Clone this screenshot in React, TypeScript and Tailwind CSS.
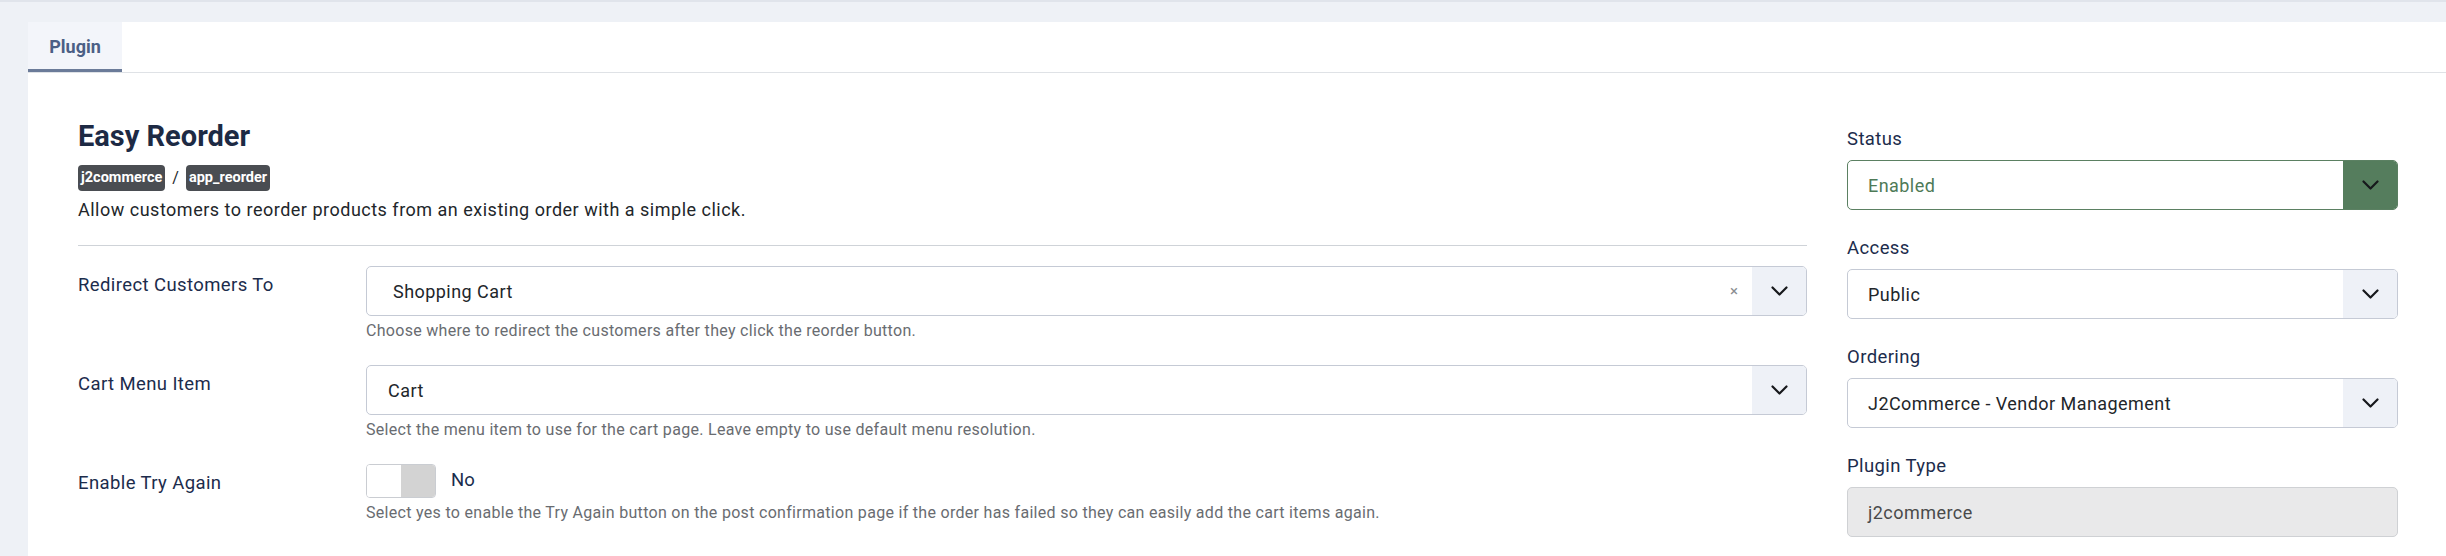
import { ReactNode } from "react";

function Chevron() {
  return (
    <svg width="17" height="10" viewBox="0 0 17 10" fill="none">
      <polyline
        points="1.5,1.5 8.5,8.5 15.5,1.5"
        stroke="#16181b"
        strokeWidth="2.2"
        strokeLinecap="round"
        strokeLinejoin="round"
      />
    </svg>
  );
}

function Select({
  value,
  pad = "pl-[20px]",
  clearable = false,
}: {
  value: string;
  pad?: string;
  clearable?: boolean;
}) {
  return (
    <div className="flex h-[50px] rounded-[5px] border border-[#c5cad5] bg-white overflow-hidden">
      <div className={`flex flex-1 items-center ${pad} text-[18px] tracking-[0.45px] text-[#22262a]`}>
        {value}
      </div>
      {clearable && (
        <div className="flex w-[36px] items-center justify-center text-[15px] text-[#8a8d91]">
          ×
        </div>
      )}
      <div className="flex w-[54px] items-center justify-center bg-[#eef1f7]">
        <Chevron />
      </div>
    </div>
  );
}

function Row({ label, help, children }: { label: string; help: string; children: ReactNode }) {
  return (
    <div className="grid grid-cols-[288px_1fr]">
      <div className="pt-[6px] text-[18.5px] leading-[26px] tracking-[0.4px] text-[#1c2c4c]">{label}</div>
      <div>
        {children}
        <p className="mt-[4px] text-[16px] leading-[22px] tracking-[0.3px] text-[#696c71]">{help}</p>
      </div>
    </div>
  );
}

function Field({ label, children }: { label: string; children: ReactNode }) {
  return (
    <div className="mb-[25px]">
      <div className="mb-[8px] text-[18.5px] leading-[26px] tracking-[0.4px] text-[#1c2c4c]">{label}</div>
      {children}
    </div>
  );
}

export default function App() {
  return (
    <div className="h-[556px] overflow-hidden border-t-2 border-[#e0e4eb] bg-[#eef1f6] pt-[20px] pl-[28px] font-[Roboto,sans-serif]">
      <div className="h-full bg-white">
        {/* tab strip */}
        <div className="flex h-[51px] border-b border-[#dfe2e6]">
          <div className="flex w-[94px] items-center justify-center border-b-[3px] border-[#6b7b99] bg-[#f3f5fa] pt-[2px] text-[18px] font-bold text-[#4b5f85]">
            Plugin
          </div>
        </div>

        <div className="flex pl-[50px] pr-[48px]">
          {/* main settings */}
          <div className="flex-1 pt-[46px]">
            <h2 className="text-[29px] leading-[35px] font-bold text-[#1d2a44]">Easy Reorder</h2>
            <div className="mt-[11px] flex items-center gap-[7px] text-[14.5px] font-bold">
              <span className="rounded-[4px] bg-[#4a4d52] px-[3px] leading-[26px] text-white">j2commerce</span>
              <span className="text-[16px] font-normal text-[#22262a]">/</span>
              <span className="rounded-[4px] bg-[#4a4d52] px-[3px] leading-[26px] text-white">app_reorder</span>
            </div>
            <p className="mt-[6px] text-[18px] leading-[26px] tracking-[0.5px] text-[#22262a]">
              Allow customers to reorder products from an existing order with a simple click.
            </p>
            <hr className="mt-[22px] border-[#cfd3d8]" />

            <div className="mt-[20px] flex flex-col gap-[23px]">
              <Row
                label="Redirect Customers To"
                help="Choose where to redirect the customers after they click the reorder button."
              >
                <Select value="Shopping Cart" pad="pl-[26px]" clearable />
              </Row>
              <Row
                label="Cart Menu Item"
                help="Select the menu item to use for the cart page. Leave empty to use default menu resolution."
              >
                <Select value="Cart" pad="pl-[21px]" />
              </Row>
              <Row
                label="Enable Try Again"
                help="Select yes to enable the Try Again button on the post confirmation page if the order has failed so they can easily add the cart items again."
              >
                <div className="flex items-center">
                  <div className="flex h-[34px] w-[70px] overflow-hidden rounded-[4px] border border-[#cacdd2]">
                    <div className="flex-1 bg-white" />
                    <div className="flex-1 bg-[#d3d3d3]" />
                  </div>
                  <span className="ml-[15px] text-[18.5px] text-[#1a2c4d]">No</span>
                </div>
              </Row>
            </div>
          </div>

          {/* sidebar */}
          <div className="ml-[40px] w-[551px] pt-[53px]">
            <Field label="Status">
              <div className="flex h-[50px] overflow-hidden rounded-[5px] border border-[#5b8062] bg-white">
                <div className="flex flex-1 items-center pl-[20px] text-[18px] tracking-[0.45px] text-[#4e7a57]">Enabled</div>
                <div className="flex w-[54px] items-center justify-center bg-[#557d5d]">
                  <Chevron />
                </div>
              </div>
            </Field>
            <Field label="Access">
              <Select value="Public" />
            </Field>
            <Field label="Ordering">
              <Select value="J2Commerce - Vendor Management" />
            </Field>
            <Field label="Plugin Type">
              <div className="flex h-[50px] items-center rounded-[5px] border border-[#cfd1d4] bg-[#e9e9ea] pl-[20px] text-[18px] tracking-[0.45px] text-[#4a4a4a]">
                j2commerce
              </div>
            </Field>
          </div>
        </div>
      </div>
    </div>
  );
}
